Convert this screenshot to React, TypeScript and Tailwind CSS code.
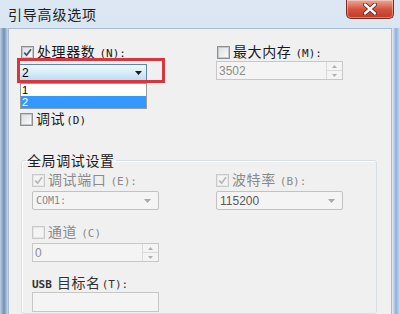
import React from "react"

const cjk = "font-['Noto_Sans_CJK_SC',sans-serif]"
const half = "font-['DejaVu_Sans_Mono',monospace] text-[11px]"

function Check({ checked, disabled }: { checked?: boolean; disabled?: boolean }) {
  return (
    <span
      className={`w-[13px] h-[13px] border flex items-center justify-center shrink-0 ${
        disabled ? "border-[#c9c9c9] bg-[#f4f4f4]" : "border-[#8e8f8f] bg-white"
      }`}
    >
      <span
        className={`w-[11px] h-[11px] border flex items-center justify-center ${
          disabled
            ? "border-[#e6e6e6] bg-[#f4f4f4]"
            : "border-[#c4c8cc] bg-gradient-to-br from-[#dedfe0] to-[#fbfbfb]"
        }`}
      >
        {checked && (
          <svg width="9" height="9" viewBox="0 0 9 9">
            <path
              d="M1.2 4.6 L3.6 7.2 L8 1.2"
              fill="none"
              stroke={disabled ? "#b8b8b8" : "#44506f"}
              strokeWidth="1.7"
            />
          </svg>
        )}
      </span>
    </span>
  )
}

function Label({ text, suffix, gap = true }: { text: string; suffix: string; gap?: boolean }) {
  return (
    <span className="flex items-baseline whitespace-nowrap">
      <span className="text-[14px] leading-[14px] tracking-[0.6px]">{text}</span>
      <span className={`${half} leading-[14px] ${gap ? "ml-[4px]" : "ml-[1px]"}`}>{suffix}</span>
    </span>
  )
}

function CheckRow({
  text,
  suffix,
  gap,
  checked,
  disabled,
}: {
  text: string
  suffix: string
  gap?: boolean
  checked?: boolean
  disabled?: boolean
}) {
  return (
    <div
      className={`flex items-center gap-[3px] h-[14px] ${
        disabled ? "text-[#8a8a8a]" : "text-[#1a1a1a]"
      }`}
    >
      <Check checked={checked} disabled={disabled} />
      <Label text={text} suffix={suffix} gap={gap} />
    </div>
  )
}

function Arrow({ color }: { color: string }) {
  return (
    <svg width="7" height="4" viewBox="0 0 7 4">
      <path d="M0 0 H7 L3.5 4 Z" fill={color} />
    </svg>
  )
}

function DisabledCombo({ value, mono }: { value: string; mono?: boolean }) {
  return (
    <div className="w-[127px] h-[19px] border border-[#c2c2c2] rounded-[2px] bg-[#f4f4f4] flex items-center justify-between pl-[3px] pr-[7px]">
      <span
        className={
          mono
            ? "font-['DejaVu_Sans_Mono',monospace] text-[10px] text-[#8a8a8a]"
            : "font-['Liberation_Sans',sans-serif] text-[12px] text-[#5a5a5a]"
        }
      >
        {value}
      </span>
      <Arrow color="#a8a8a8" />
    </div>
  )
}

function Spin({ value }: { value: string }) {
  return (
    <div className="w-[127px] h-[19px] border border-[#c7c7c7] bg-[#f4f4f4] flex items-stretch">
      <span className="flex-1 pl-[2px] flex items-center font-['Liberation_Sans',sans-serif] text-[12px] text-[#8d8d8d]">
        {value}
      </span>
      <div className="w-[16px] flex flex-col border-l border-[#dadada]">
        <div className="flex-1 flex items-center justify-center border-b border-[#dadada]">
          <svg width="5" height="3" viewBox="0 0 5 3">
            <path d="M0 3 H5 L2.5 0 Z" fill="#b0b0b0" />
          </svg>
        </div>
        <div className="flex-1 flex items-center justify-center">
          <svg width="5" height="3" viewBox="0 0 5 3">
            <path d="M0 0 H5 L2.5 3 Z" fill="#b0b0b0" />
          </svg>
        </div>
      </div>
    </div>
  )
}

function CloseButton() {
  return (
    <div className="w-[48px] h-[19px] rounded-b-[5px] border border-t-0 border-[#7b2c22] bg-gradient-to-b from-[#eaa999] via-[#d4543f] to-[#c0392a] flex items-center justify-center shadow-[inset_0_0_0_1px_rgba(255,255,255,0.35)]">
      <svg width="14" height="12" viewBox="0 0 14 12">
        <path d="M2 1.5 L12 10.5 M12 1.5 L2 10.5" stroke="#5a1c14" strokeWidth="4" strokeLinecap="round" />
        <path d="M2 1.5 L12 10.5 M12 1.5 L2 10.5" stroke="#ffffff" strokeWidth="2.4" strokeLinecap="round" />
      </svg>
    </div>
  )
}

export default function App() {
  return (
    <div
      className={`w-[400px] h-[314px] overflow-hidden flex flex-col bg-gradient-to-b from-[#dce7f3] to-[#c6d8ec] ${cjk}`}
    >
      {/* title bar */}
      <div className="h-[28px] shrink-0 flex items-start justify-between pl-[8px] pr-[6px]">
        <span className="pt-[7px] text-[14px] leading-[14px] tracking-[0.8px] text-[#1e1e1e]">
          引导高级选项
        </span>
        <CloseButton />
      </div>

      <div className="flex-1 flex min-h-0">
        <div className="w-[8px] shrink-0 bg-gradient-to-r from-[#bcd0e6] via-[#6f8fb2] to-[#c9dbee]" />

        {/* client area */}
        <div className="flex-1 bg-[#f0f0f0] border-t border-l border-r border-[#a9bbd0] pl-[10px] pt-[16px] flex flex-col">
          <div className="flex">
            {/* left column */}
            <div className="w-[197px] flex flex-col">
              <div className="pl-[2px]">
                <CheckRow text="处理器数" suffix="(N):" checked />
              </div>

              <div className="relative mt-[5px] w-[128px] h-[17px]">
                <div className="w-full h-full border border-[#5a87b8] bg-gradient-to-b from-[#f3f9fd] via-[#d8ecf9] to-[#b9def5] flex items-center justify-between pl-[2px] pr-[4px]">
                  <span className="font-['Liberation_Sans',sans-serif] text-[12px] leading-[12px] text-black">
                    2
                  </span>
                  <Arrow color="#1c1c1c" />
                </div>
                {/* red annotation box */}
                <div className="absolute left-[-2px] top-[-6px] w-[148px] h-[25px] border-[3px] border-[#d8353d]" />
              </div>

              <div className="mt-[2px] ml-[1px] w-[127px] border border-[#9a9a9a] bg-white flex flex-col font-['Liberation_Sans',sans-serif] text-[11px]">
                <div className="h-[12px] leading-[12px] pl-[1px] text-black">1</div>
                <div className="h-[12px] leading-[12px] pl-[1px] bg-[#3399ff] text-white">2</div>
              </div>

              <div className="mt-[3px] pl-[1px]">
                <CheckRow text="调试" suffix="(D)" gap={false} />
              </div>
            </div>

            {/* right column */}
            <div className="flex flex-col">
              <div className="pl-[1px]">
                <CheckRow text="最大内存" suffix="(M):" />
              </div>
              <div className="mt-[2px]">
                <Spin value="3502" />
              </div>
            </div>
          </div>

          {/* group box */}
          <fieldset className="mt-[26px] ml-[2px] mr-[14px] flex-1 border border-[#d5dfe5] rounded-[3px] shadow-[inset_1px_1px_0_#ffffff] pl-[10px] pt-[5px]">
            <legend className="ml-[-6px] px-[1px] text-[14px] leading-[16px] tracking-[0.6px] text-[#1a1a1a]">
              全局调试设置
            </legend>
            <div className="flex">
              <div className="w-[184px] flex flex-col">
                <CheckRow text="调试端口" suffix="(E):" checked disabled />
                <div className="mt-[4px]">
                  <DisabledCombo value="COM1:" mono />
                </div>
                <div className="mt-[15px]">
                  <CheckRow text="通道" suffix="(C)" disabled />
                </div>
                <div className="mt-[4px]">
                  <Spin value="0" />
                </div>
                <div className="mt-[13px] h-[14px] flex items-baseline text-[#333333]">
                  <span className={`${half} leading-[14px] font-bold mr-[5px]`}>USB</span>
                  <Label text="目标名" suffix="(T):" gap={false} />
                </div>
                <div className="mt-[3px] w-[127px] h-[20px] border border-[#c7c7c7] bg-[#f4f4f4]" />
              </div>
              <div className="flex flex-col">
                <CheckRow text="波特率" suffix="(B):" checked disabled />
                <div className="mt-[4px]">
                  <DisabledCombo value="115200" />
                </div>
              </div>
            </div>
          </fieldset>
        </div>

        <div className="w-[8px] shrink-0 bg-gradient-to-r from-[#e6eef7] via-[#8fb1d4] to-[#cddff0]" />
      </div>
    </div>
  )
}
